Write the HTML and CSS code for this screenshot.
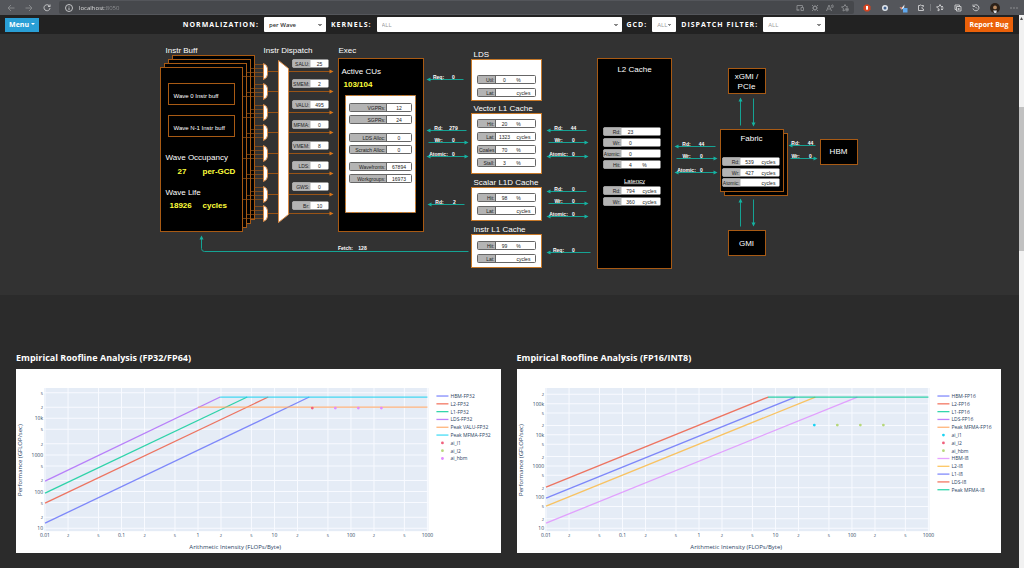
FILE: index.html
```
<!DOCTYPE html>
<html lang="en">
<head>
    <meta charset="UTF-8">
    <meta name="viewport" content="width=device-width, initial-scale=1.0">
    <title>Memory Chart and Roofline</title>
    <link rel="stylesheet" href="styles.css">
</head>
<body>
    <header class="browser">
        <div class="browser-nav">
            <button class="icon dim" aria-label="Back"><svg viewBox="0 0 16 16"><path d="M15 8H2M8 2L2 8l6 6"/></svg></button>
            <button class="icon dim" aria-label="Forward"><svg viewBox="0 0 16 16"><path d="M1 8h13M8 2l6 6-6 6"/></svg></button>
            <button class="icon" aria-label="Reload"><svg viewBox="0 0 16 16"><path d="M14 8a6 6 0 1 1-2-5l2 2M14 1v4h-4"/></svg></button>
        </div>
        <div class="address">
            <svg class="info" viewBox="0 0 16 16"><circle cx="8" cy="8" r="7"/><path d="M8 7v5M8 4v1"/></svg>
            <input class="url" type="text" value="localhost:8050" aria-label="Address">
            <div class="address-icons">
                <button class="icon dim" aria-label="Devices"><svg viewBox="0 0 16 16"><path d="M6 12H2V3h11v3M1 12h6M10 7h5v6h-5z"/></svg></button>
                <button class="icon dim" aria-label="Apps"><svg viewBox="0 0 16 16"><path d="M2 2l3 3M14 2l-3 3M2 14l3-3M14 14l-3-3M5 5h6v6H5zM2 8h3M11 8h3M8 2v3M8 11v3"/></svg></button>
                <button class="icon dim" aria-label="Read aloud"><svg viewBox="0 0 16 16"><path d="M1 14L6 2l5 12M3 10h6M11 2q2 2 0 5M13 1q3 3 0 7"/></svg></button>
                <button class="icon dim" aria-label="Add favorite"><svg viewBox="0 0 16 16"><path d="M8 12l-4 2 1-5-4-3 5-1 2-4 2 4 4 1"/><circle cx="12" cy="11" r="3"/><path d="M12 9v4M10 11h4"/></svg></button>
            </div>
        </div>
        <div class="browser-tools">
            <button class="icon" aria-label="Ad blocker"><svg viewBox="0 0 16 16"><path class="red" d="M5 1h6l4 4v6l-4 4H5l-4-4V5z"/><path class="white" d="M6 7V4h4v5l-1 3H7L6 9z"/></svg></button>
            <button class="icon" aria-label="Extension"><svg viewBox="0 0 16 16"><circle class="pale" cx="8" cy="8" r="6"/><circle class="navy" cx="8" cy="8" r="3"/></svg></button>
            <button class="icon" aria-label="Notes"><svg viewBox="0 0 16 16"><path class="pale" d="M1 6l5 1 5-6-1 8-5 2z"/><path class="red" d="M2 6l4 1-1 3z"/><rect class="blue" x="8" y="8" width="9" height="9"/></svg></button>
            <button class="icon" aria-label="Extensions"><svg viewBox="0 0 16 16"><path d="M13 5V3H9q-1-3-3 0H3v10h10v-3q-4 0-3-3 1-2 3-2"/></svg></button>
            <span class="divider"></span>
            <button class="icon" aria-label="Favorites"><svg viewBox="0 0 16 16"><path d="M8 11l-4 3 1-5-4-3 5-1 2-4 2 4h4M10 8h5M10 11h4"/></svg></button>
            <button class="icon" aria-label="Collections"><svg viewBox="0 0 16 16"><path d="M4 11H2V2h9v3M5 5h9v9H5zM7 10h5M9 8v4"/></svg></button>
            <button class="icon" aria-label="History"><svg viewBox="0 0 16 16"><path d="M3 4a6 6 0 1 1-1 5M2 1v4h4M7 6l3 3"/></svg></button>
            <button class="icon avatar" aria-label="Profile"><svg viewBox="0 0 16 16"><circle class="hair" cx="8" cy="8" r="8"/><circle class="face" cx="8" cy="7" r="3"/><path class="pale" d="M5 12h6l-1 4H7z"/></svg></button>
            <button class="icon" aria-label="More"><svg viewBox="0 0 16 16"><path d="M1 8h2M7 8h2M13 8h2"/></svg></button>
        </div>
    </header>

    <div class="viewport">
        <main class="page">
            <nav class="filters">
                <button class="btn menu">Menu <span class="caret"></span></button>
                <div class="filter-group">
                    <label for="norm">NORMALIZATION:</label>
                    <select id="norm" class="medium set"><option>per Wave</option></select>
                    <label for="kernels">KERNELS:</label>
                    <select id="kernels" class="wide"><option>ALL</option></select>
                    <label for="gcd">GCD:</label>
                    <select id="gcd" class="narrow"><option>ALL</option></select>
                    <label for="dispatch">DISPATCH FILTER:</label>
                    <select id="dispatch" class="medium"><option>ALL</option></select>
                </div>
                <button class="btn report">Report Bug</button>
            </nav>

            <section class="memory">
                <svg id="memoryChart" viewBox="0 34 1019 261" role="img" aria-label="Memory chart"></svg>
            </section>

            <section class="rooflines">
                <article>
                    <h2>Empirical Roofline Analysis (FP32/FP64)</h2>
                    <svg id="fp32" class="chart" viewBox="0 0 484 184"></svg>
                </article>
                <article>
                    <h2>Empirical Roofline Analysis (FP16/INT8)</h2>
                    <svg id="fp16" class="chart" viewBox="0 0 484 184"></svg>
                </article>
            </section>
        </main>
        <div class="scrollbar"><span class="up"></span><div class="thumb"></div></div>
    </div>

    <script src="script.js"></script>
</body>
</html>
```

FILE: styles.css
```
* {
    box-sizing: border-box;
}
body {
    margin: 0;
    height: 100vh;
    display: flex;
    flex-direction: column;
    overflow: hidden;
    background-color: #2b2b2b;
    font-family: "Open Sans", sans-serif;
}
button, input, select {
    font-family: inherit;
    border: 0;
    padding: 0;
    margin: 0;
}

/* browser bar */
.browser {
    display: flex;
    align-items: center;
    height: 15px;
    flex: none;
    background-color: #54565b;
}
.browser-nav {
    display: flex;
    gap: 10px;
    padding: 0 8px 0 7px;
}
.icon {
    display: flex;
    width: 8px;
    height: 8px;
    background: none;
}
.icon svg, .info {
    width: 8px;
    height: 8px;
    flex: none;
    fill: none;
    stroke: #c4c5c7;
    stroke-width: 2;
    overflow: visible;
}
.icon.dim svg {
    stroke: #85878a;
}
.icon .red { fill: #d8431f; stroke: none; }
.icon .white { fill: #ffffff; stroke: none; }
.icon .pale { fill: #dfe4ea; stroke: none; }
.icon .navy { fill: #44618c; stroke: none; }
.icon .blue { fill: #5fa8ee; stroke: none; }
.icon .hair { fill: #2c2119; stroke: none; }
.icon .face { fill: #b98a62; stroke: none; }
.address {
    display: flex;
    align-items: center;
    flex: 1;
    height: 13px;
    padding: 0 5px 0 6px;
    border-radius: 2px;
    background-color: #46484c;
}
.url {
    flex: 1;
    margin-left: 6px;
    height: 10px;
    font-size: 6px;
    color: transparent;
    background: linear-gradient(90deg, #eeeeee 26px, #929497 26px);
    -webkit-background-clip: text;
    background-clip: text;
}
.address-icons {
    display: flex;
    gap: 7px;
}
.browser-tools {
    display: flex;
    align-items: center;
    gap: 10px;
    padding: 0 6px 0 9px;
}
.divider {
    width: 1px;
    height: 7px;
    margin: 0 -5px;
    background-color: #77797d;
}
.icon.avatar, .icon.avatar svg {
    width: 10px;
    height: 10px;
}

/* page and scrollbar */
.viewport {
    display: flex;
    flex: 1;
    min-height: 0;
}
.page {
    flex: 1;
    min-width: 0;
}
.scrollbar {
    width: 5px;
    background-color: #f1f1f1;
}
.up {
    display: block;
    margin: 2px 1px 0;
    height: 3px;
    background-color: #505050;
    clip-path: polygon(50% 0, 100% 100%, 0 100%);
}
.thumb {
    height: 26%;
    margin-top: 87px;
    background-color: #c1c1c1;
}

/* filter bar */
.filters {
    display: flex;
    align-items: center;
    height: 19px;
    padding: 0 6px 0 5px;
    background-color: #222222;
}
.btn {
    height: 14px;
    color: white;
    font-size: 7px;
    font-weight: 700;
    line-height: 13px;
}
.menu {
    width: 34px;
    background-color: #2a9fd6;
}
.caret {
    display: inline-block;
    margin-bottom: 2px;
    border: 2px solid transparent;
    border-top-color: white;
    border-bottom: 0;
}
.report {
    width: 48px;
    height: 15px;
    background-color: #eb6109;
}
.filter-group {
    display: flex;
    flex: 1;
    align-items: center;
    justify-content: center;
    gap: 5px;
    padding-left: 4px;
}
.filter-group label {
    color: white;
    font-size: 7px;
    font-weight: 700;
    letter-spacing: 1px;
}
select {
    appearance: none;
    height: 15px;
    padding-left: 5px;
    border-radius: 1px;
    color: #999999;
    font-size: 6px;
    background-color: white;
    background-image: linear-gradient(to top right, transparent 50%, #888888 50%), linear-gradient(to top left, transparent 50%, #888888 50%);
    background-size: 2px 2px;
    background-position: right 6px center, right 4px center;
    background-repeat: no-repeat;
}
.set {
    color: #333333;
    font-weight: 600;
}
.narrow { width: 24px; }
.medium { width: 62px; }
.wide { width: 245px; }

/* memory chart */
.memory {
    background-color: #323232;
}
.memory svg {
    display: block;
    width: 100%;
    font-family: "Liberation Sans", Arial, sans-serif;
}
.block {
    fill: black;
    stroke: #a85a14;
}
.panel {
    fill: white;
    stroke: #c87a2a;
}
.dashed {
    stroke-dasharray: 3 1;
}
.mux {
    fill: white;
    stroke: #d98a45;
}
.wire {
    fill: none;
    stroke: #9a5416;
}
.thin {
    stroke-opacity: 0.7;
}
.head {
    fill: #d9761a;
}
.flow {
    fill: none;
    stroke: #15a394;
}
.flow-head {
    fill: #15b3a2;
}
.title { fill: white; font-size: 8px; }
.middle { text-anchor: middle; }
.end { text-anchor: end; }
.metric { fill: #ffff3c; font-size: 8px; font-weight: 700; }
.note { fill: white; font-size: 6px; }
.flow-text { fill: white; font-size: 5px; font-weight: 700; text-anchor: middle; }
.underline { text-decoration: underline; font-size: 6px; }
.cell { fill: white; }
.cell-key { fill: #b4b4b4; }
.cell-line { fill: none; stroke: #666666; }
.cell-text { fill: #222222; font-size: 5px; }

/* roofline charts */
.rooflines {
    display: grid;
    grid-template-columns: 1fr 1fr;
    gap: 16px;
    padding: 56px 18px 14px 16px;
    background-color: #2b2b2b;
}
.rooflines h2 {
    margin: 0 0 5px;
    color: white;
    font-size: 9px;
    line-height: 13px;
    font-weight: 700;
}
.chart {
    display: block;
    width: 100%;
    background-color: white;
}
.plot { fill: #e5ecf6; }
.grid { stroke: #f8faff; }
.series { fill: none; stroke-opacity: 0.8; stroke-width: 1.3; }
.tick { fill: #2a3f5f; font-size: 5px; }
.minor { font-size: 4px; }
.axis-title { fill: #2a3f5f; font-size: 6px; }
.legend { fill: #2a3f5f; font-size: 5px; }
```

FILE: script.js
```
const BLUE = '#636efa', RED = '#ef553b', GREEN = '#00cc96', PURPLE = '#ab63fa';
const ORANGE = '#ffa15a', CYAN = '#19d3f3', PINK = '#e08cff', YELLOW = '#fdb83c';
const LIME = '#b6d77a', ROSE = '#f0607c';

function rect(cls, x, y, w, h, r = 0) {
    return `<rect class="${cls}" x="${x}" y="${y}" width="${w}" height="${h}" rx="${r}"/>`;
}
function path(cls, d) {
    return `<path class="${cls}" d="${d}"/>`;
}
function text(cls, x, y, value) {
    return `<text class="${cls}" x="${x}" y="${y}">${value}</text>`;
}

// key / value / unit strip
function cell(x, y, w, keyW, key, value, unit = '', outlined = true) {
    const valueW = unit === null ? w - keyW : 18;
    let out = rect('cell', x, y, w, 8, 1) + rect('cell-key', x, y, keyW, 8, 1);
    if (outlined) out += rect('cell-line', x, y, w, 8, 1) + path('cell-line', `M${x + keyW} ${y}v8`);
    out += text('cell-text end', x + keyW - 1, y + 6, key);
    out += text('cell-text middle', x + keyW + valueW / 2, y + 6, value);
    if (unit === '%') out += text('cell-text middle', x + keyW + 23, y + 6, unit);
    else if (unit) out += text('cell-text', x + keyW + 21, y + 6, unit);
    return out;
}

// horizontal arrow, dir is 'l', 'r' or 'b' for both
function flow(x1, x2, y, dir, label, value) {
    let out = path('flow', `M${x1 + 2} ${y}H${x2 - 2}`);
    if (dir !== 'r') out += path('flow-head', `M${x1} ${y}l4 -2v4z`);
    if (dir !== 'l') out += path('flow-head', `M${x2} ${y}l-4 -2v4z`);
    const start = x1 + (x2 - x1 > 35 ? 12 : 7);
    return out + text('flow-text', start, y - 1, label + ':') + text('flow-text', start + 15, y - 1, value);
}

function vertical(x, y1, y2, up) {
    const head = up ? `M${x} ${y1}l2 4h-4z` : `M${x} ${y2}l2 -4h-4z`;
    return path('flow', `M${x} ${y1 + 1}V${y2 - 1}`) + path('flow-head', head);
}

function drawMemory() {
    let s = '<g transform="translate(.5 .5)">';

    // instruction buffers
    s += text('title', 165, 52, 'Instr Buff');
    for (let i = 3; i >= 0; i--) s += rect('block', 160 + i * 4, 67 - i * 4, 82, 164);
    s += rect('block', 168, 83, 66, 21) + text('note', 173, 97, 'Wave 0 Instr buff');
    s += rect('block', 168, 115, 66, 21) + text('note', 173, 129, 'Wave N-1 Instr buff');
    s += text('title', 165, 159, 'Wave Occupancy') + text('metric', 177, 173, '27') + text('metric', 202, 173, 'per-GCD');
    s += text('title', 165, 194, 'Wave Life') + text('metric', 169, 207, '18926') + text('metric', 202, 207, 'cycles');

    // dispatch
    s += text('title', 263, 52, 'Instr Dispatch');
    const units = [['SALU', 25], ['SMEM', 2], ['VALU', 495], ['MFMA', 0], ['VMEM', 8], ['LDS', 0], ['GWS', 0], ['Br', 10]];
    const rows = [71, 91, 112, 132, 153, 173, 194, 213];
    rows.forEach((y, i) => {
        for (let k = 0; k < 4; k++) s += path('wire thin', `M${254 - k * 4} ${y - 7 + k * 4}H263`);
        s += path('wire', `M267 ${y}H330`) + path('head', `M333 ${y}l-4 -2v4z`);
        s += path('mux', `M263 ${y - 8}l3 2 1 3v6l-1 3-3 2z`);
        s += cell(292, y - 12, 36, 18, units[i][0] + ':', units[i][1], null, false);
    });
    s += path('mux', 'M278 60l10 8v146l-10 8z');

    // exec
    s += text('title', 338, 52, 'Exec') + rect('block', 338, 58, 85, 173);
    s += text('title', 341, 73, 'Active CUs') + text('metric', 343, 86, '103/104');
    s += rect('panel dashed', 345, 95, 70, 117);
    [[103, 'VGPRs', 12], [115, 'SGPRs', 24], [133, 'LDS Alloc', 0], [145, 'Scratch Alloc', 0],
     [162, 'Wavefronts', 67894], [174, 'Workgroups', 16973]].forEach(([y, key, value]) => {
        s += cell(349, y, 62, 37, key + ':', value, null);
    });

    // L1 caches
    const caches = [
        ['LDS', 59, 41, [[75, 'Util', 0, '%'], [88, 'Lat', '', 'cycles']]],
        ['Vector L1 Cache', 113, 60, [[119, 'Hit', 20, '%'], [132, 'Lat', 1323, 'cycles'], [145, 'Coales', 70, '%'], [158, 'Stall', 3, '%']]],
        ['Scalar L1D Cache', 187, 33, [[193, 'Hit', 98, '%'], [206, 'Lat', '', 'cycles']]],
        ['Instr L1 Cache', 234, 33, [[241, 'Hit', 99, '%'], [254, 'Lat', '', 'cycles']]]
    ];
    caches.forEach(([name, y, h, cells]) => {
        s += text('title', 473, y - 3, name) + rect('panel', 471, y, 70, h);
        cells.forEach(c => s += cell(477, c[0], 58, 18, c[1] + (c[1] === 'Coales' ? '' : ':'), c[2], c[3]));
    });

    // L2
    s += rect('block', 597, 58, 74, 210) + text('title middle', 634, 71, 'L2 Cache');
    [[127, 'Rd', 23], [138, 'Wr', 0], [149, 'Atomic', 0], [160, 'Hit', 4, '%'],
     [186, 'Rd', 794, 'cycles'], [197, 'Wr', 360, 'cycles']].forEach(c => {
        s += cell(603, c[0], 57, 18, c[1] + ':', c[2], c[3], false);
    });
    s += text('title middle underline', 634, 182, 'Latency');

    // fabric and links
    s += rect('block', 724, 133, 63, 62) + rect('block', 720, 129, 63, 62) + text('title middle', 751, 140, 'Fabric');
    [[157, 'Rd', 539], [168, 'Wr', 427], [178, 'Atomic', '']].forEach(c => {
        s += cell(722, c[0], 57, 18, c[1] + ':', c[2], 'cycles', false);
    });
    s += rect('block', 728, 68, 37, 25) + text('title middle', 746, 78, 'xGMI /') + text('title middle', 746, 88, 'PCIe');
    s += rect('block', 728, 230, 37, 25) + text('title middle', 746, 245, 'GMI');
    s += rect('block', 820, 139, 37, 25) + text('title middle', 838, 153, 'HBM');
    s += vertical(740, 97, 126, true) + vertical(753, 97, 126, false);
    s += vertical(740, 198, 227, true) + vertical(753, 198, 226, false);

    // traffic
    s += flow(426, 465, 79, 'l', 'Req', 0);
    s += flow(426, 468, 130, 'l', 'Rd', 279) + flow(426, 468, 142, 'r', 'Wr', 0) + flow(426, 468, 156, 'b', 'Atomic', 0);
    s += flow(427, 466, 204, 'l', 'Rd', 2);
    s += flow(546, 588, 130, 'l', 'Rd', 44) + flow(546, 588, 142, 'r', 'Wr', 0) + flow(546, 588, 156, 'b', 'Atomic', 0);
    s += flow(546, 588, 191, 'l', 'Rd', 0) + flow(546, 588, 203, 'r', 'Wr', 0) + flow(546, 588, 216, 'b', 'Atomic', 0);
    s += flow(546, 592, 252, 'l', 'Req', 0);
    s += flow(674, 717, 146, 'l', 'Rd', 44) + flow(674, 717, 158, 'r', 'Wr', 0) + flow(674, 717, 172, 'b', 'Atomic', 0);
    s += flow(788, 817, 145, 'l', 'Rd', 44) + flow(788, 817, 158, 'r', 'Wr', 0);
    s += path('flow', 'M468 251H204q-3 0 -3 -3V238') + path('flow-head', 'M201 235l2 4h-4z');
    s += text('flow-text', 345, 249, 'Fetch:') + text('flow-text', 362, 249, '128');

    document.getElementById('memoryChart').innerHTML = s + '</g>';
}

// log-log chart
function drawRoofline(id, chart) {
    const left = 29, decadeX = 76.4, bottom = 159, decadeY = chart.decadeY;
    const px = v => left + (Math.log10(v) + 2) * decadeX;
    const py = v => bottom - (Math.log10(v) - 1) * decadeY;
    const name = v => v >= 10000 ? v / 1000 + 'k' : String(v);
    let s = rect('plot', 28, 19, 384, 143);

    for (let e = -2; e <= 3; e++) {
        [1, 2, 5].forEach(m => {
            const v = Number((m * 10 ** e).toFixed(2));
            if (v > 1000) return;
            s += path('grid', `M${px(v)} 19V162`);
            s += text(m === 1 ? 'tick middle' : 'tick minor middle', px(v), 168, m === 1 ? v : m);
        });
    }
    for (let e = 1; e <= 5; e++) {
        [1, 2, 5].forEach(m => {
            const v = m * 10 ** e;
            if (py(v) < 20) return;
            s += path('grid', `M28 ${py(v)}H412`);
            s += text(m === 1 ? 'tick end' : 'tick minor end', 27, py(v) + 2, m === 1 ? name(v) : m);
        });
    }

    chart.lines.forEach(([color, x1, y1, x2, y2]) => {
        s += `<path class="series" stroke="${color}" d="M${px(x1)} ${y1}L${x2} ${y2}"/>`;
    });
    chart.points.forEach(([color, x, y]) => {
        s += `<circle fill="${color}" cx="${x}" cy="${y}" r="1.4"/>`;
    });
    chart.legend.forEach(([color, label, dot], i) => {
        const y = 27 + i * 7.8;
        s += dot ? `<circle fill="${color}" cx="426" cy="${y}" r="1.4"/>`
                 : `<path class="series" stroke="${color}" d="M420 ${y}h12"/>`;
        s += text('legend', 434, y + 2, label);
    });

    s += text('axis-title middle', 219, 180, 'Arithmetic Intensity (FLOPs/Byte)');
    s += `<text class="axis-title middle" transform="translate(6 91) rotate(-90)">Performance (GFLOP/sec)</text>`;
    document.getElementById(id).innerHTML = s;
}

drawMemory();

drawRoofline('fp32', {
    decadeY: 36.6,
    lines: [
        [BLUE, 0.01, 154, 293, 28], [RED, 0.01, 134, 252, 28], [GREEN, 0.01, 124, 231, 28], [PURPLE, 0.01, 112, 204, 28],
        [ORANGE, 1, 38, 411, 38], [CYAN, 1.95, 28, 411, 28]
    ],
    points: [[ROSE, 296, 39], [PINK, 319, 39], [PINK, 342, 39], [PINK, 365, 39]],
    legend: [
        [BLUE, 'HBM-FP32'], [RED, 'L2-FP32'], [GREEN, 'L1-FP32'], [PURPLE, 'LDS-FP32'], [ORANGE, 'Peak VALU-FP32'],
        [CYAN, 'Peak MFMA-FP32'], [ROSE, 'ai_l1', true], [LIME, 'ai_l2', true], [PINK, 'ai_hbm', true]
    ]
});

drawRoofline('fp16', {
    decadeY: 31.1,
    lines: [
        [RED, 0.01, 118, 251, 28], [BLUE, 0.01, 129, 278, 28], [YELLOW, 0.01, 137, 298, 28], [PINK, 0.01, 154, 340, 28],
        [GREEN, 8, 28, 411, 28]
    ],
    points: [[CYAN, 297, 56], [LIME, 320, 56], [LIME, 343, 56], [LIME, 366, 56]],
    legend: [
        [BLUE, 'HBM-FP16'], [RED, 'L2-FP16'], [GREEN, 'L1-FP16'], [PURPLE, 'LDS-FP16'], [ORANGE, 'Peak MFMA-FP16'],
        [CYAN, 'ai_l1', true], [ROSE, 'ai_l2', true], [LIME, 'ai_hbm', true], [PINK, 'HBM-I8'], [YELLOW, 'L2-I8'],
        [BLUE, 'L1-I8'], [RED, 'LDS-I8'], [GREEN, 'Peak MFMA-I8']
    ]
});
```
